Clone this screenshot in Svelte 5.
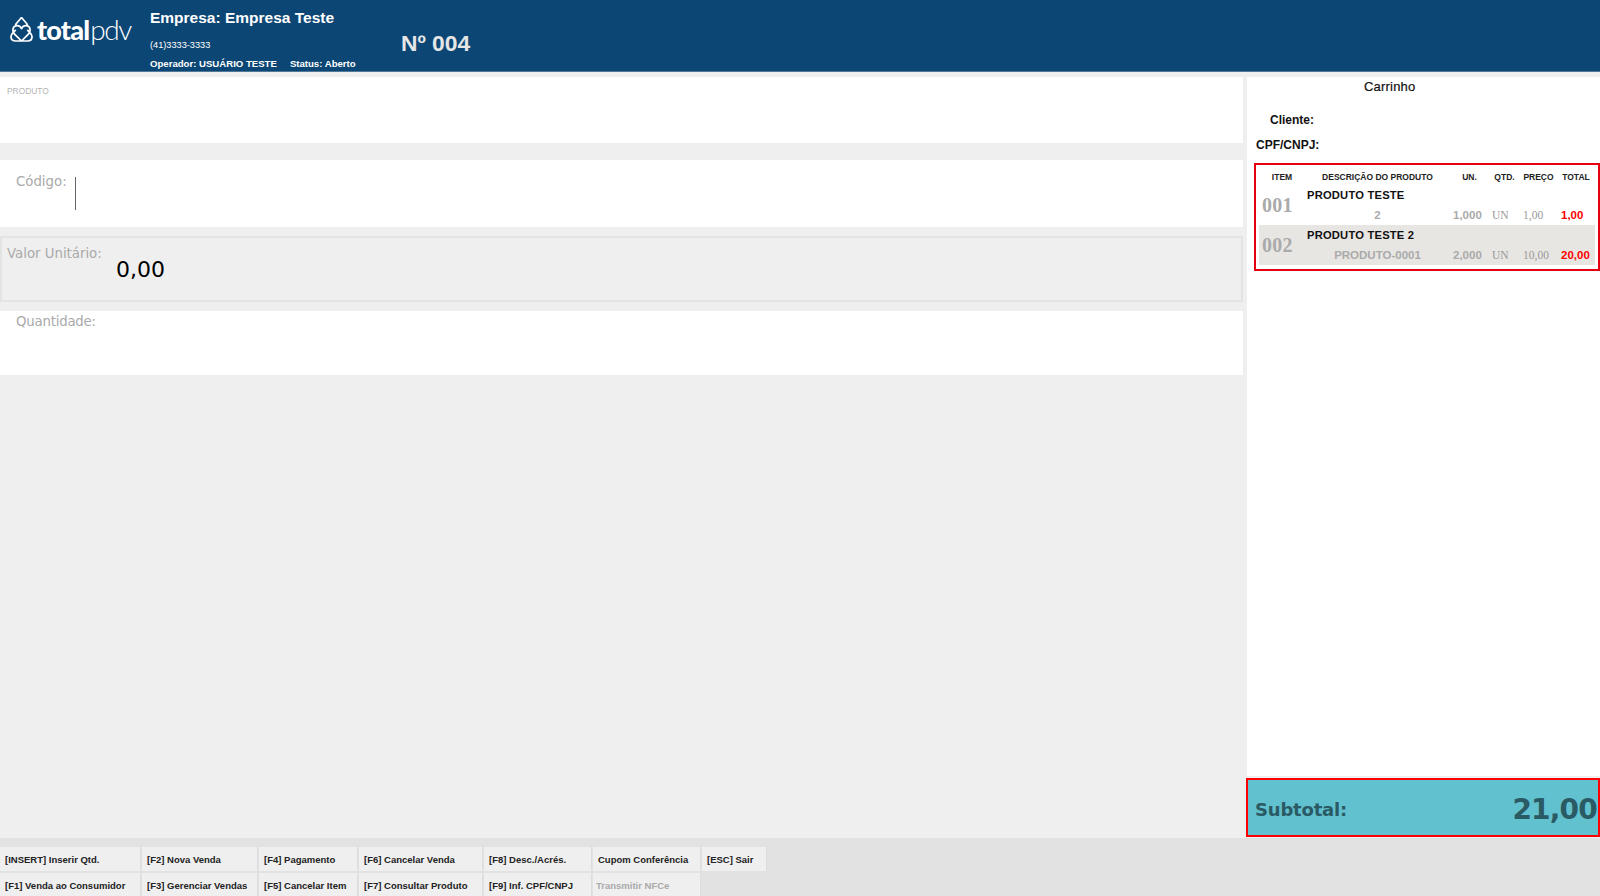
<script>
	const topButtons = ['[INSERT] Inserir Qtd.', '[F2] Nova Venda', '[F4] Pagamento', '[F6] Cancelar Venda', '[F8] Desc./Acrés.', 'Cupom Conferência', '[ESC] Sair'];
	const bottomButtons = ['[F1] Venda ao Consumidor', '[F3] Gerenciar Vendas', '[F5] Cancelar Item', '[F7] Consultar Produto', '[F9] Inf. CPF/CNPJ', 'Transmitir NFCe'];
	const widths = [141, 116, 99, 124, 108, 108, 65];

	const items = [
		{ n: '001', name: 'PRODUTO TESTE', code: '2', qty: '1,000', un: 'UN', price: '1,00', total: '1,00' },
		{ n: '002', name: 'PRODUTO TESTE 2', code: 'PRODUTO-0001', qty: '2,000', un: 'UN', price: '10,00', total: '20,00' }
	];
</script>

<div class="page">
	<header class="top">
		<div class="logo">
			<svg class="mark" viewBox="0 0 24 28" width="23" height="27" aria-hidden="true">
				<path d="M12 1.5 L18 8.5 L18 11 M12 1.5 L6 8.5 L6 11 M3 15 Q3 10 7.5 10 Q10.5 10 12 13 Q13.5 10 16.5 10 Q21 10 21 15 Q21 17 19 19 L12 26 M12 26 L6 26 Q1 26 1 21.5 Q1 19.5 3 17.5 L6 14.5 M12 26 L18 26 Q23 26 23 21.5 Q23 19.5 21 17.5 L18 14.5 M3 15 Q3 17 5 19 L12 26" fill="none" stroke="#fff" stroke-width="1.8" stroke-linejoin="round" />
			</svg>
			<span class="total">total</span><span class="pdv">pdv</span>
		</div>
		<div class="info">
			<div class="company">Empresa: Empresa Teste</div>
			<div class="phone">(41)3333-3333</div>
			<div class="operator"><span>Operador: USUÁRIO TESTE</span><span>Status: Aberto</span></div>
		</div>
		<div class="number">Nº 004</div>
	</header>

	<main class="main">
		<section class="left">
			<div class="panel product"><span>PRODUTO</span></div>
			<div class="panel code">
				<label for="codigo">Código:</label>
				<span class="caret" id="codigo"></span>
			</div>
			<div class="panel unit">
				<span class="unit-label">Valor Unitário:</span>
				<span class="unit-value">0,00</span>
			</div>
			<div class="panel qty"><span>Quantidade:</span></div>
		</section>

		<aside class="cart">
			<div class="cart-body">
				<h2>Carrinho</h2>
				<div class="client">Cliente:</div>
				<div class="doc">CPF/CNPJ:</div>
				<div class="items">
					<table>
						<colgroup>
							<col style="width:46px" /><col style="width:145px" /><col style="width:39px" /><col style="width:31px" /><col style="width:37px" /><col style="width:38px" />
						</colgroup>
						<thead>
							<tr>
								<th>ITEM</th><th>DESCRIÇÃO DO PRODUTO</th><th>UN.</th><th>QTD.</th><th>PREÇO</th><th>TOTAL</th>
							</tr>
						</thead>
						<tbody>
							{#each items as item, i}
								<tr class:alt={i % 2 === 1}>
									<td class="num" rowspan="2">{item.n}</td>
									<td class="name" colspan="5">{item.name}</td>
								</tr>
								<tr class:alt={i % 2 === 1}>
									<td class="code-cell">{item.code}</td>
									<td class="val">{item.qty}</td>
									<td class="serif">{item.un}</td>
									<td class="serif">{item.price}</td>
									<td class="sum">{item.total}</td>
								</tr>
							{/each}
						</tbody>
					</table>
				</div>
			</div>
			<div class="subtotal">
				<span>Subtotal:</span>
				<strong>21,00</strong>
			</div>
		</aside>
	</main>

	<footer class="keys">
		<div class="key-row">
			{#each topButtons as label, i}
				<button type="button" style={`width:${widths[i]}px`}>{label}</button>
			{/each}
		</div>
		<div class="key-row">
			{#each bottomButtons as label, i}
				<button type="button" class:off={label === 'Transmitir NFCe'} style={`width:${widths[i]}px`}>{label}</button>
			{/each}
		</div>
	</footer>
</div>

<style>
	:global(body) {
		margin: 0;
		background: #efefef;
	}

	.page {
		display: flex;
		flex-direction: column;
		width: 1600px;
		height: 896px;
		overflow: hidden;
		font-family: 'Liberation Sans', Arial, sans-serif;
		background: #efefef;
	}

	.top {
		display: flex;
		flex: none;
		height: 71px;
		background: #0c4675;
		border-bottom: 1px solid #52789a;
		color: #fff;
	}

	.logo {
		display: flex;
		align-items: center;
		width: 150px;
		height: 58px;
		padding-left: 10px;
		box-sizing: border-box;
		font-family: Lato, sans-serif;
		font-size: 27px;
	}

	.mark {
		flex: none;
		margin-right: 4px;
	}

	.total {
		font-weight: 900;
		letter-spacing: -0.8px;
	}

	.pdv {
		font-weight: 300;
		margin-left: 1px;
		font-size: 28px;
		letter-spacing: -1.5px;
	}

	.info {
		width: 250px;
		padding-top: 9px;
		font-weight: 700;
	}

	.company {
		font-size: 15.5px;
		line-height: 18px;
	}

	.phone {
		margin-top: 11px;
		font-size: 9.2px;
		font-weight: 400;
		line-height: 14px;
	}

	.operator {
		display: flex;
		gap: 13px;
		margin-top: 5px;
		font-size: 9.6px;
		line-height: 14px;
	}

	.number {
		padding: 31px 0 0 1px;
		font-size: 22.8px;
		font-weight: 700;
		line-height: 25px;
		color: #e6e6e6;
	}

	.main {
		display: flex;
		flex: 1;
		min-height: 0;
		padding-top: 5px;
		gap: 4px;
	}

	.left {
		display: flex;
		flex-direction: column;
		width: 1243px;
		flex: none;
	}

	.panel {
		box-sizing: border-box;
		background: #fff;
		font-family: 'DejaVu Sans', Tahoma, sans-serif;
		color: #aaa;
		font-size: 13.3px;
	}

	.product {
		height: 66px;
		padding: 9px 7px;
		font-family: 'Liberation Sans', Arial, sans-serif;
		font-size: 8.4px;
		line-height: 11px;
		color: #b5b5b5;
	}

	.code {
		display: flex;
		gap: 8px;
		height: 67px;
		margin-top: 17px;
		padding: 14px 0 0 16px;
	}

	.caret {
		width: 1px;
		height: 33px;
		margin-top: 3px;
		background: #666;
	}

	.unit {
		display: flex;
		height: 66px;
		margin-top: 9px;
		padding: 8px 0 0 5px;
		background: #efefef;
		border: 2px solid #e3e3e3;
	}

	.unit-label {
		width: 109px;
	}

	.unit-value {
		margin-top: 9px;
		font-size: 22px;
		line-height: 30px;
		color: #000;
	}

	.qty {
		height: 64px;
		margin-top: 9px;
		padding: 3px 16px;
		letter-spacing: -0.2px;
	}

	.cart {
		display: flex;
		flex-direction: column;
		flex: 1;
	}

	.cart-body {
		flex: 1;
		padding-top: 2px;
		background: #fff;
		margin-bottom: 2px;
	}

	h2 {
		margin: 0 0 0 117px;
		font-size: 13px;
		font-weight: 400;
		line-height: 16px;
		color: #111;
		letter-spacing: 0.2px;
		-webkit-text-stroke: 0.2px #111;
	}

	.client {
		margin: 17px 0 0 23px;
		font-size: 12px;
		font-weight: 700;
		line-height: 16px;
		color: #111;
	}

	.doc {
		margin: 9px 0 0 9px;
		font-size: 12px;
		font-weight: 700;
		line-height: 16px;
		color: #111;
	}

	.items {
		margin: 10px 0 0 7px;
		padding: 3px 3px 4px;
		border: 2px solid #e5000f;
	}

	table {
		width: 336px;
		table-layout: fixed;
		border-collapse: collapse;
	}

	th {
		height: 17px;
		padding: 0;
		font-size: 8.5px;
		font-weight: 700;
		color: #222;
		text-align: center;
	}

	td {
		height: 20px;
		padding: 0 0 0 3px;
		font-size: 11.5px;
		font-weight: 700;
		color: #aaa;
		white-space: nowrap;
	}

	.alt td {
		background: #e8e6e3;
	}

	td.num {
		padding: 0 0 0 3px;
		font-family: 'Liberation Serif', serif;
		font-size: 20px;
		letter-spacing: 0.2px;
	}

	td.name {
		padding-left: 2px;
		font-size: 11.2px;
		color: #111;
		letter-spacing: 0.2px;
	}

	td.code-cell {
		padding: 0;
		text-align: center;
	}

	td.serif {
		font-family: 'Liberation Serif', serif;
		font-weight: 400;
		font-size: 11.5px;
		color: #999;
	}

	td.sum {
		padding-left: 4px;
		color: #f00;
	}

	.subtotal {
		display: flex;
		flex: none;
		align-items: center;
		justify-content: space-between;
		box-sizing: border-box;
		height: 59px;
		margin: 0 0 1px -1px;
		padding: 3px 1px 0 7px;
		background: #62c1cf;
		border: 2px solid #f00;
		font-family: 'DejaVu Sans', Verdana, sans-serif;
		font-weight: 700;
		color: #2a5a64;
	}

	.subtotal span {
		font-size: 18px;
		letter-spacing: -0.2px;
	}

	.subtotal strong {
		font-size: 28px;
		letter-spacing: -0.8px;
	}

	.keys {
		display: flex;
		flex: none;
		flex-direction: column;
		gap: 2px;
		height: 58px;
		padding-top: 9px;
		box-sizing: border-box;
		background: #e2e2e2;
	}

	.key-row {
		display: flex;
		gap: 1px;
	}

	button {
		box-sizing: border-box;
		height: 24px;
		padding: 0 0 0 5px;
		background: #efefef;
		border: 0;
		border-right: 1px solid #ddd;
		font-family: 'Liberation Sans', Arial, sans-serif;
		font-size: 9.5px;
		font-weight: 700;
		color: #222;
		text-align: left;
		white-space: nowrap;
	}

	button.off {
		padding-left: 3px;
		color: #aaa;
	}
</style>
